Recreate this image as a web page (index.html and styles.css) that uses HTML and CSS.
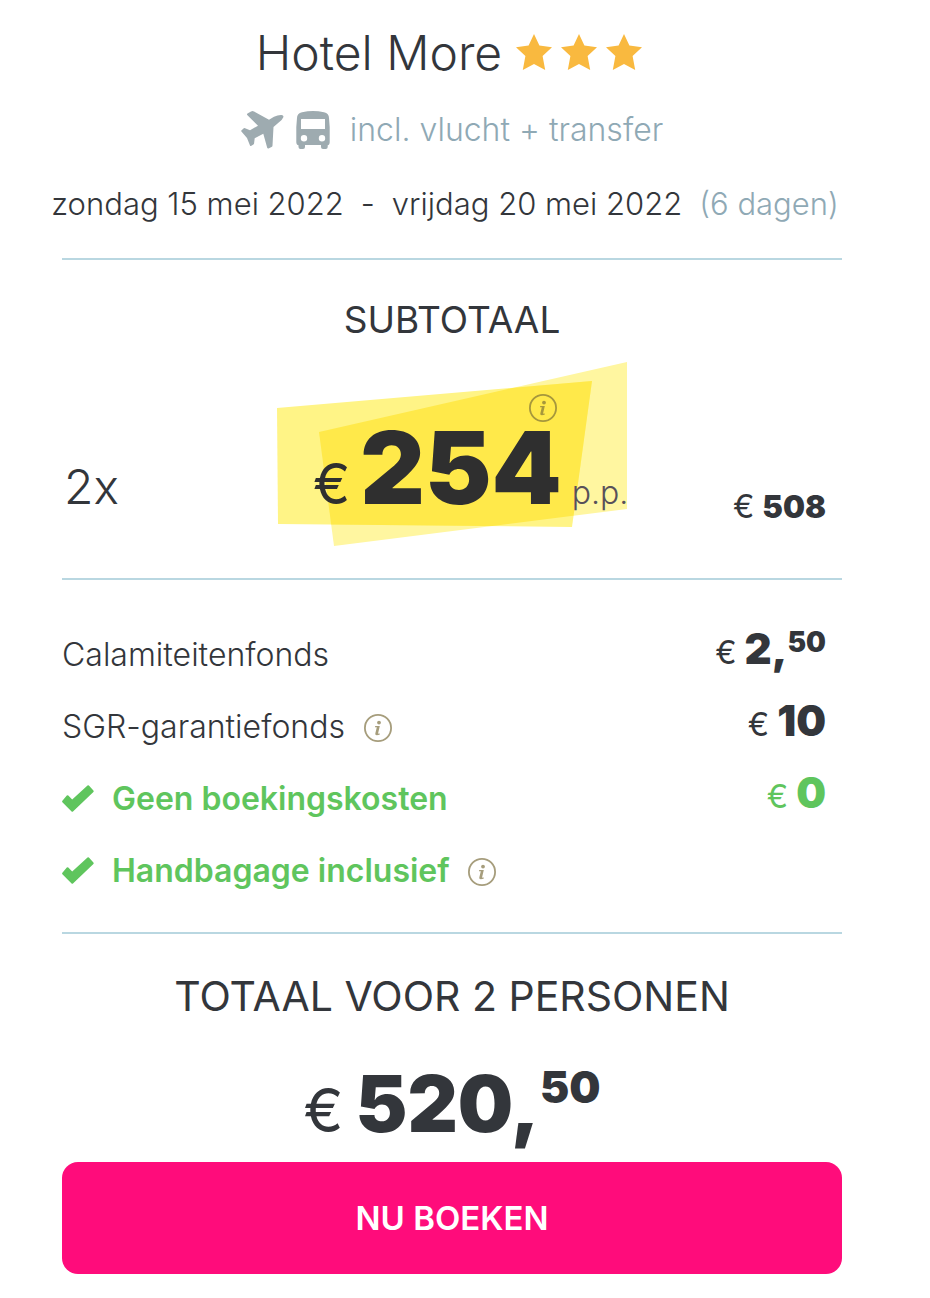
FILE: index.html
```html
<!DOCTYPE html>
<html lang="nl">
<head>
    <meta charset="UTF-8">
    <meta name="viewport" content="width=device-width, initial-scale=1.0">
    <title>Hotel More</title>
    <link rel="stylesheet" href="styles.css">
</head>
<body>
    <svg class="defs" aria-hidden="true">
        <symbol id="star" viewBox="0 0 36 36">
            <path d="M18 0l5.400 11.500L36 13.200l-9.400 8.800L29.200 36 18 30 6.800 36l2.600-14L0 13.200l12.600-1.700z"/>
        </symbol>
        <symbol id="info" viewBox="0 0 28 28">
            <circle cx="14" cy="14" r="13.100" fill="none" stroke="currentColor" stroke-width="1.800"/>
            <circle cx="15" cy="8.600" r="1.900" fill="currentColor"/>
            <path d="M11.200 12h4.600l-1.700 7.200q0 .8 1.900.3v.8q-1.500.9-3.300.9-1.800 0-1.400-1.700l1.500-6.200h-1.800z" fill="currentColor"/>
        </symbol>
        <symbol id="check" viewBox="0 0 32 27">
            <path d="M.4 15.700l4.400-5.100q.8-.8 1.500 0l3.900 3.900L25.500.4q.7-.6 1.400.2l4.500 4.900q.7.800 0 1.500L11 26.500q-.7.700-1.400 0L.4 17.200q-.7-.7 0-1.500z"/>
        </symbol>
    </svg>
    <div class="container">
        <h1>Hotel More
            <span class="stars">
                <svg><use href="#star"/></svg>
                <svg><use href="#star"/></svg>
                <svg><use href="#star"/></svg>
            </span>
        </h1>
        <div class="transport">
            <svg class="plane" viewBox="0 0 43 38">
                <path d="M6.500 2.500L10 .5q1.500-.8 3 0L28 8.700l5-2.900q4-2 7.500-1.800 2.500.3 1.800 2.300-1 2.700-4.300 5L32.500 16l-1 18.500q0 1.200-1 1.600l-3 1.400q-1 .3-1.300-.7L22.300 22.700l-8.600 4.600-.6 5q0 .8-.7 1.200l-2.400 1.400q-.7.300-1-.5L6 27 .4 20.600q-.5-.8.200-1.300L2.800 17.300q.6-.5 1.300-.1L9 19.300l8-4.600L6.200 4q-.7-.8.300-1.500z"/>
            </svg>
            <svg class="bus" viewBox="0 0 34 38">
                <path fill-rule="evenodd" d="M1 7Q1 2.500 6 1.200 17-1 28 1.200 33 2.500 33 7l.7 9v15q0 3-2 3.200V36q0 2-2 2H27q-2 0-2-2v-2H9v2q0 2-2 2H4.500q-2 0-2-2v-1.800Q.3 34 .3 31V16zM5 8v10h24V8zM8 24a3.200 3.200 0 1 0 0 6.400A3.200 3.200 0 0 0 8 24zm18 0a3.200 3.200 0 1 0 0 6.400A3.200 3.200 0 0 0 26 24z"/>
            </svg>
            <span>incl. vlucht + transfer</span>
        </div>
        <div class="dates">
            <span>zondag 15 mei 2022</span>
            <span>-</span>
            <span>vrijdag 20 mei 2022</span>
            <span class="muted">(6 dagen)</span>
        </div>

        <section class="subtotal">
            <h2>SUBTOTAAL</h2>
            <div class="subtotal-row">
                <span class="persons">2x</span>
                <div class="highlight">
                    <svg class="highlight-bg" viewBox="0 0 350 184" preserveAspectRatio="none">
                        <clipPath id="front"><polygon points="0,46 315,19 295,165 1,162"/></clipPath>
                        <polygon points="42,70 350,0 350,147 57,184" fill="#fff6a0"/>
                        <polygon points="0,46 315,19 295,165 1,162" fill="#fff486"/>
                        <polygon points="42,70 350,0 350,147 57,184" fill="#ffe94a" clip-path="url(#front)"/>
                    </svg>
                    <svg class="info highlight-info"><use href="#info"/></svg>
                    <span class="euro">€</span>
                    <strong>254</strong>
                    <span class="pp">p.p.</span>
                </div>
                <span class="sum">€<strong>508</strong></span>
            </div>
        </section>

        <section class="costs">
            <table>
                <tr>
                    <th>Calamiteitenfonds</th>
                    <td>€<strong>2,<sup>50</sup></strong></td>
                </tr>
                <tr>
                    <th>SGR-garantiefonds <svg class="info"><use href="#info"/></svg></th>
                    <td>€<strong>10</strong></td>
                </tr>
                <tr class="free">
                    <th><svg class="check"><use href="#check"/></svg>Geen boekingskosten</th>
                    <td>€<strong>0</strong></td>
                </tr>
                <tr class="free">
                    <th><svg class="check"><use href="#check"/></svg>Handbagage inclusief <svg class="info"><use href="#info"/></svg></th>
                    <td></td>
                </tr>
            </table>
        </section>

        <section class="total">
            <h2>TOTAAL VOOR 2 PERSONEN</h2>
            <p class="total-price">€<strong>520,<sup>50</sup></strong></p>
            <button type="button">NU BOEKEN</button>
        </section>
    </div>
</body>
</html>
```

FILE: styles.css
```css
body {
    font-family: Inter, "Liberation Sans", sans-serif;
    font-size: 32px;
    font-weight: 300;
    line-height: 40px;
    color: #33363b;
    background-color: #fff;
    margin: 0;
}
.defs {
    position: absolute;
    width: 0;
    height: 0;
}
.container {
    padding: 23px 88px 24px 62px;
}
h1, h2, p {
    margin: 0;
}
h1 {
    display: flex;
    justify-content: center;
    align-items: center;
    gap: 14px;
    padding-right: 6px;
    font-size: 48px;
    font-weight: 300;
    line-height: 60px;
}
.stars {
    display: flex;
    gap: 9px;
    padding-bottom: 2px;
}
.stars svg {
    width: 36px;
    height: 36px;
    fill: #f9b93f;
}
.transport {
    display: flex;
    justify-content: center;
    align-items: center;
    margin-top: 27px;
    color: #8fa9b5;
}
.transport svg {
    fill: #9eabb0;
    height: 38px;
}
.plane {
    width: 43px;
    margin-right: 12px;
}
.bus {
    width: 34px;
    margin-right: 20px;
}
.dates {
    display: flex;
    justify-content: center;
    gap: 17px;
    margin: 34px 4px 34px -10px;
    font-size: 31px;
    white-space: nowrap;
}
.muted {
    color: #8fa9b5;
}
section {
    border-top: 2px solid #b9d7e1;
}
h2 {
    font-weight: 400;
    text-align: center;
}
.subtotal h2 {
    font-size: 37px;
    margin: 40px 0 22px;
}
.subtotal-row {
    display: grid;
    grid-template-columns: 1fr 350px 1fr;
    align-items: baseline;
    margin-bottom: 32px;
}
.persons {
    padding-left: 2px;
    font-size: 48px;
}
.highlight {
    position: relative;
    box-sizing: border-box;
    display: flex;
    align-items: baseline;
    height: 184px;
    padding: 58px 0 0 36px;
    line-height: 96px;
    color: #2f2f2f;
}
.highlight-bg {
    position: absolute;
    top: 0;
    left: 0;
    width: 100%;
    height: 100%;
}
.highlight span, .highlight strong {
    position: relative;
}
.highlight .euro {
    font-size: 56px;
    font-weight: 400;
}
.highlight strong {
    margin: 0 10px;
    font-size: 100px;
}
.highlight .pp {
    font-size: 32px;
    color: #57505a;
}
.info {
    width: 28px;
    height: 28px;
    color: #a69d7c;
}
.highlight-info {
    position: absolute;
    top: 32px;
    left: 252px;
    color: #a6973c;
}
.sum {
    align-self: end;
    padding: 0 16px 19px 0;
    text-align: right;
    font-weight: 400;
}
strong {
    margin-left: 8px;
    font-weight: 900;
}
.sum strong {
    font-size: 31px;
}
.costs {
    padding: 39px 0 25px;
}
table {
    width: 100%;
    border-collapse: collapse;
}
tr {
    height: 72px;
}
th, td {
    padding: 0;
    white-space: nowrap;
}
th {
    font-weight: 300;
    text-align: left;
}
td {
    padding-right: 16px;
    padding-bottom: 8px;
    text-align: right;
    font-weight: 400;
}
td strong {
    font-size: 42px;
}
sup {
    font-size: 28px;
    line-height: 0;
    vertical-align: 12px;
}
th .info {
    margin-left: 10px;
    vertical-align: -4px;
}
.check {
    width: 32px;
    height: 27px;
    margin-right: 18px;
    vertical-align: -2px;
    fill: #5fc55d;
}
.free {
    color: #5fc55d;
}
.free th {
    font-weight: 600;
}
.total h2 {
    margin-top: 38px;
    font-size: 41px;
    line-height: 48px;
}
.total-price {
    margin: 50px 0 12px;
    font-size: 60px;
    font-weight: 400;
    line-height: 80px;
    text-align: center;
}
.total-price strong {
    margin-left: 12px;
    font-size: 78px;
    line-height: 0;
}
.total-price sup {
    font-size: 44px;
    vertical-align: 29px;
}
button {
    width: 100%;
    height: 112px;
    border: none;
    border-radius: 16px;
    background-color: #ff0c7b;
    color: #fff;
    font-family: inherit;
    font-size: 33px;
    font-weight: 600;
    cursor: pointer;
}
button:hover {
    background-color: #e0006a;
}
```
